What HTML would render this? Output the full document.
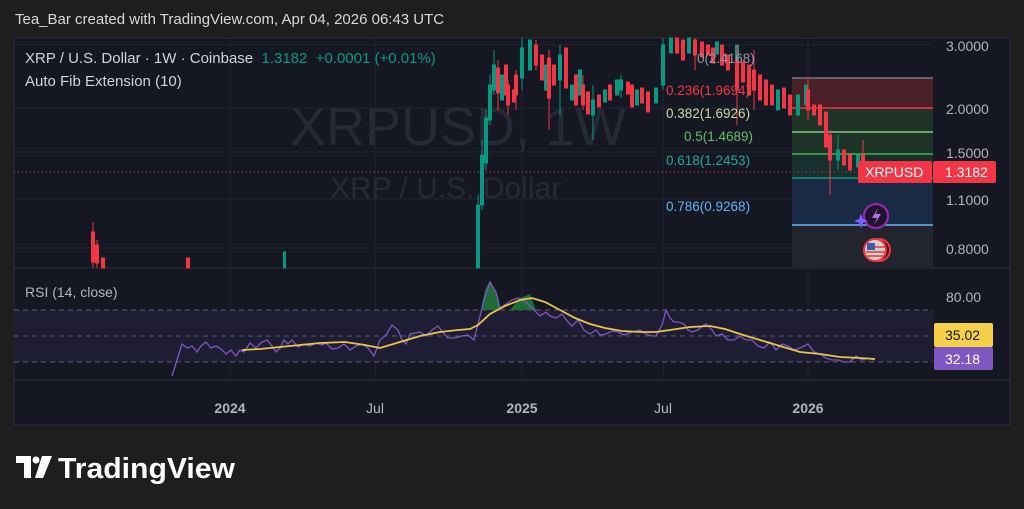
<!DOCTYPE html>
<html><head><meta charset="utf-8"><style>
html,body{margin:0;padding:0;background:#1e1e1e;width:1024px;height:509px;overflow:hidden;font-family:"Liberation Sans",sans-serif}
.t{position:absolute;white-space:nowrap}
</style></head><body>
<div class="t" style="left:15px;top:11px;font-size:15px;color:#d8d8d8">Tea_Bar created with TradingView.com, Apr 04, 2026 06:43 UTC</div>
<svg style="position:absolute;left:0;top:0" width="1024" height="509" font-family="Liberation Sans, sans-serif">
<rect x="14" y="38" width="996" height="387" fill="#151822"/>
<rect x="14" y="38" width="996" height="387" fill="none" stroke="#2a2e39"/>
<g stroke="#1f2330" stroke-width="1">
<line x1="14" y1="45" x2="933" y2="45"/><line x1="14" y1="108" x2="933" y2="108"/><line x1="14" y1="152" x2="933" y2="152"/><line x1="14" y1="199" x2="933" y2="199"/><line x1="14" y1="248" x2="933" y2="248"/>
<line x1="230" y1="38" x2="230" y2="380"/><line x1="375" y1="38" x2="375" y2="380"/><line x1="522" y1="38" x2="522" y2="380"/><line x1="663" y1="38" x2="663" y2="380"/><line x1="808" y1="38" x2="808" y2="380"/>
</g>
<line x1="14" y1="268" x2="1010" y2="268" stroke="#2a2e39"/>
<line x1="14" y1="380" x2="1010" y2="380" stroke="#2a2e39"/>
<text x="290" y="145" font-size="54" fill="#262a37">XRPUSD, 1W</text>
<text x="330" y="198" font-size="30" fill="#262a37">XRP / U.S. Dollar</text>
<!-- fib zone -->
<rect x="792" y="78" width="141" height="30" fill="#4a1f26"/>
<rect x="792" y="108" width="141" height="24" fill="#1f3327"/>
<rect x="792" y="132" width="141" height="22" fill="#1e3428"/>
<rect x="792" y="154" width="141" height="24" fill="#17302d"/>
<rect x="792" y="178" width="141" height="47" fill="#1a2a44"/>
<rect x="792" y="225" width="141" height="43" fill="#22252e"/>
<g stroke-width="1.5">
<line x1="792" y1="78" x2="933" y2="78" stroke="#787b86"/>
<line x1="792" y1="108" x2="933" y2="108" stroke="#f23645"/>
<line x1="792" y1="132" x2="933" y2="132" stroke="#81c784"/>
<line x1="792" y1="154" x2="933" y2="154" stroke="#4caf50"/>
<line x1="792" y1="178" x2="933" y2="178" stroke="#089981"/>
<line x1="792" y1="225" x2="933" y2="225" stroke="#64b5f6"/>
</g>
<line x1="14" y1="172" x2="858" y2="172" stroke="#f23645" stroke-dasharray="1,3"/>
<!-- candles -->
<g stroke-width="1">
<g fill="#f23645" stroke="#f23645">
<line x1="93" y1="222" x2="93" y2="268"/><rect x="91.5" y="232" width="3" height="30"/>
<line x1="97" y1="240" x2="97" y2="268"/><rect x="95.5" y="245" width="3" height="18"/>
<rect x="101.5" y="258" width="3" height="10"/><rect x="186.5" y="258" width="3" height="10"/>
</g>
<g fill="#089981" stroke="#089981"><rect x="283.5" y="252" width="2" height="16"/></g>
<g fill="#089981" stroke="#089981">
<line x1="478" y1="195" x2="478" y2="268"/><rect x="476.5" y="205" width="3" height="63"/>
<line x1="482" y1="140" x2="482" y2="210"/><rect x="480.5" y="155" width="3" height="50"/>
<line x1="486" y1="110" x2="486" y2="170"/><rect x="484.5" y="118" width="3" height="45"/>
<line x1="490" y1="75" x2="490" y2="125"/><rect x="488.5" y="85" width="3" height="35"/>
<line x1="494" y1="50" x2="494" y2="95"/><rect x="492.5" y="65" width="3" height="25"/>
<rect x="500.5" y="75" width="3" height="25"/>
<line x1="522" y1="38" x2="522" y2="90"/><rect x="520.5" y="48" width="3" height="30"/>
<rect x="528.5" y="40" width="3" height="30"/>
<rect x="544.5" y="65" width="3" height="25"/>
<line x1="560" y1="45" x2="560" y2="115"/><rect x="558.5" y="55" width="3" height="25"/>
<rect x="570.5" y="85" width="3" height="15"/>
<rect x="578.5" y="70" width="3" height="25"/>
<line x1="593" y1="85" x2="593" y2="140"/><rect x="591.5" y="100" width="3" height="15"/>
<rect x="603.5" y="90" width="3" height="12"/>
<rect x="615.5" y="80" width="3" height="15"/>
<line x1="621" y1="75" x2="621" y2="98"/><rect x="619.5" y="80" width="3" height="10"/>
<rect x="635.5" y="90" width="3" height="15"/>
<rect x="654.5" y="88" width="3" height="15"/>
<line x1="663" y1="38" x2="663" y2="90"/><rect x="661.5" y="45" width="3" height="40"/>
<rect x="669.5" y="38" width="3" height="15"/>
<rect x="687.5" y="38" width="3" height="15"/>
<rect x="715.5" y="42" width="3" height="12"/>
<rect x="735.5" y="45" width="3" height="15"/>
<rect x="776.5" y="90" width="3" height="20"/>
<rect x="796.5" y="95" width="3" height="20"/>
<rect x="804.5" y="85" width="3" height="20"/>
<line x1="838" y1="135" x2="838" y2="170"/><rect x="836.5" y="150" width="3" height="10"/>
<rect x="856.5" y="155" width="3" height="12"/>
</g>
<g fill="#f23645" stroke="#f23645">
<line x1="498" y1="60" x2="498" y2="110"/><rect x="496.5" y="68" width="3" height="25"/>
<rect x="504.5" y="65" width="3" height="30"/>
<line x1="508" y1="80" x2="508" y2="115"/><rect x="506.5" y="85" width="3" height="20"/>
<rect x="512.5" y="90" width="3" height="12"/>
<line x1="516" y1="70" x2="516" y2="110"/><rect x="514.5" y="75" width="3" height="20"/>
<line x1="536" y1="40" x2="536" y2="70"/><rect x="534.5" y="45" width="3" height="20"/>
<rect x="540.5" y="55" width="3" height="25"/>
<line x1="549" y1="50" x2="549" y2="130"/><rect x="547.5" y="58" width="3" height="40"/>
<rect x="552.5" y="65" width="3" height="20"/>
<rect x="564.5" y="48" width="3" height="40"/>
<rect x="574.5" y="75" width="3" height="30"/>
<line x1="583" y1="75" x2="583" y2="110"/><rect x="581.5" y="85" width="3" height="20"/>
<rect x="586.5" y="92" width="3" height="22"/>
<rect x="597.5" y="95" width="3" height="12"/>
<rect x="608.5" y="85" width="3" height="15"/>
<rect x="626.5" y="82" width="3" height="12"/>
<rect x="630.5" y="85" width="3" height="22"/>
<rect x="640.5" y="88" width="3" height="15"/>
<rect x="646.5" y="92" width="3" height="20"/>
<rect x="675.5" y="38" width="3" height="15"/>
<rect x="681.5" y="40" width="3" height="20"/>
<line x1="695" y1="38" x2="695" y2="70"/><rect x="693.5" y="40" width="3" height="15"/>
<rect x="700.5" y="42" width="3" height="15"/>
<rect x="706.5" y="45" width="3" height="10"/>
<rect x="711.5" y="48" width="3" height="15"/>
<rect x="720.5" y="45" width="3" height="20"/>
<rect x="726.5" y="55" width="3" height="15"/>
<line x1="737" y1="45" x2="737" y2="125"/><rect x="735.5" y="60" width="3" height="30"/>
<rect x="741.5" y="62" width="3" height="20"/>
<rect x="747.5" y="65" width="3" height="30"/>
<line x1="754" y1="50" x2="754" y2="110"/><rect x="752.5" y="70" width="3" height="20"/>
<rect x="758.5" y="75" width="3" height="25"/>
<rect x="764.5" y="80" width="3" height="25"/>
<rect x="770.5" y="85" width="3" height="20"/>
<rect x="782.5" y="88" width="3" height="20"/>
<rect x="788.5" y="95" width="3" height="20"/>
<line x1="808" y1="78" x2="808" y2="120"/><rect x="806.5" y="90" width="3" height="20"/>
<rect x="812.5" y="105" width="3" height="10"/>
<rect x="818.5" y="105" width="3" height="20"/>
<rect x="824.5" y="112" width="3" height="35"/>
<line x1="830" y1="130" x2="830" y2="195"/><rect x="828.5" y="135" width="3" height="25"/>
<rect x="842.5" y="150" width="3" height="15"/>
<rect x="848.5" y="155" width="3" height="15"/>
<line x1="863" y1="140" x2="863" y2="170"/><rect x="861.5" y="155" width="3" height="10"/>
</g>
</g>
<!-- fib labels -->
<g font-size="13.5">
<text x="697" y="63" fill="#9598a1">0(2.4168)</text>
<text x="666" y="95" fill="#f23645">0.236(1.9694)</text>
<text x="666" y="118" fill="#c5d9a8">0.382(1.6926)</text>
<text x="684" y="141" fill="#66bb6a">0.5(1.4689)</text>
<text x="666" y="165" fill="#26a69a">0.618(1.2453)</text>
<text x="666" y="211" fill="#64b5f6">0.786(0.9268)</text>
</g>
<!-- price axis -->
<g font-size="14" fill="#b2b5be">
<text x="946" y="51">3.0000</text><text x="946" y="114">2.0000</text><text x="946" y="158">1.5000</text><text x="946" y="205">1.1000</text><text x="946" y="254">0.8000</text>
</g>
<rect x="858" y="161" width="74" height="22" rx="2" fill="#f23645"/>
<text x="865" y="177" font-size="14" fill="#fff">XRPUSD</text>
<rect x="933" y="161" width="63" height="22" rx="2" fill="#f23645"/>
<text x="945" y="177" font-size="14" fill="#fff">1.3182</text>
<!-- icons -->
<circle cx="876" cy="216" r="12" fill="#1e1430" stroke="#9c27b0" stroke-width="2"/>
<path d="M878 208 L872 218 L877 218 L874 225 L881 214 L876 214 Z" fill="#b070e0"/>
<path d="M861 214 L863 219 L868 221 L863 223 L861 228 L859 223 L854 221 L859 219 Z" fill="#7c5cff"/>
<circle cx="879" cy="250" r="11" fill="#3a1016" stroke="#f23645" stroke-width="2"/>
<circle cx="875" cy="250" r="11" fill="#d0d0d0" stroke="#f23645" stroke-width="2"/>
<rect x="867" y="243" width="8" height="7" fill="#3c5aa6"/>
<line x1="875" y1="247" x2="885" y2="247" stroke="#e53935" stroke-width="1.5"/><line x1="866" y1="252" x2="885" y2="252" stroke="#e53935" stroke-width="1.5"/><line x1="867" y1="256" x2="884" y2="256" stroke="#e53935" stroke-width="1.5"/>
<!-- RSI -->
<rect x="14" y="310" width="919" height="52" fill="#1e1d33"/>
<g stroke="#5d606b" stroke-dasharray="5,4">
<line x1="14" y1="310" x2="933" y2="310"/><line x1="14" y1="336" x2="933" y2="336"/><line x1="14" y1="362" x2="933" y2="362"/>
</g>
<path d="M481 310 L485 290 L490 281 L495 290 L500 310 Z" fill="#1f6b3a"/>
<path d="M510 310 L520 298 L530 294 L536 310 Z" fill="#1f6b3a"/>
<polyline fill="none" stroke="#7e57c2" stroke-width="1.3" points="172,376 177,360 182,344 187,348 192,346 197,352 201,346 206,342 211,348 216,346 221,349 226,354 231,350 236,356 240,350 244,352 250,343 256,348 262,342 267,340 272,346 276,352 280,348 284,340 288,344 292,340 298,347 304,344 310,346 316,343 322,345 326,343 332,349 338,348 344,344 350,350 356,346 362,344 368,348 374,356 380,340 386,335 392,325 398,330 402,340 406,344 410,334 415,333 420,332 426,336 432,330 438,326 444,334 448,338 454,338 462,336 468,335 474,340 479,320 484,300 490,282 496,292 500,308 506,304 512,300 518,298 526,302 532,308 540,316 546,312 550,316 556,318 562,314 568,322 572,326 578,320 584,330 590,334 596,330 600,335 606,334 612,331 618,332 624,335 632,332 640,330 646,334 652,336 656,336 662,325 666,310 670,318 674,322 678,322 684,324 688,330 692,332 698,330 702,326 706,324 712,330 716,336 722,334 728,340 734,340 740,336 746,340 752,340 758,346 764,348 770,342 776,350 782,344 788,346 794,350 800,348 808,344 814,352 820,354 826,358 832,360 838,360 844,362 850,362 856,356 862,360 868,358 874,360"/>
<polyline fill="none" stroke="#e8c54b" stroke-width="1.8" points="242,350 260,349 280,347 300,345 320,343 345,342 365,345 380,348 400,342 420,336 440,332 458,330 470,329 478,325 490,314 505,306 520,300 532,298 545,302 560,310 575,318 590,324 605,328 622,331 640,332 656,332 670,330 690,327 710,326 725,329 740,334 760,340 780,346 800,352 820,354 840,357 860,358 875,359"/>
<text x="25" y="297" font-size="14" fill="#b2b5be">RSI (14, close)</text>
<text x="946" y="302" font-size="14" fill="#b2b5be">80.00</text>
<rect x="934" y="323" width="59" height="24" rx="2" fill="#f5d14a"/>
<text x="945" y="340" font-size="14" fill="#131722">35.02</text>
<rect x="934" y="347" width="59" height="23" rx="2" fill="#7e57c2"/>
<text x="945" y="364" font-size="14" fill="#fff">32.18</text>
<!-- time -->
<g font-size="14" fill="#b2b5be" text-anchor="middle">
<text x="230" y="413" font-weight="bold">2024</text><text x="375" y="413">Jul</text><text x="522" y="413" font-weight="bold">2025</text><text x="663" y="413">Jul</text><text x="808" y="413" font-weight="bold">2026</text>
</g>
<!-- logo -->
<path d="M16 456 H31 V478 H24 V463 H16 Z" fill="#fff"/>
<circle cx="36" cy="460" r="3.5" fill="#fff"/>
<path d="M42 456 H52 L43 478 H35 Z" fill="#fff"/>
<text x="58" y="478" font-size="29" font-weight="bold" fill="#fff" textLength="177" lengthAdjust="spacingAndGlyphs">TradingView</text>
</svg>
<div class="t" style="left:25px;top:50px;font-size:15px;color:#d1d4dc">XRP / U.S. Dollar · 1W · Coinbase <span style="color:#089981">&nbsp;1.3182 &nbsp;+0.0001 (+0.01%)</span></div>
<div class="t" style="left:25px;top:73px;font-size:15px;color:#d1d4dc">Auto Fib Extension (10)</div>
</body></html>
